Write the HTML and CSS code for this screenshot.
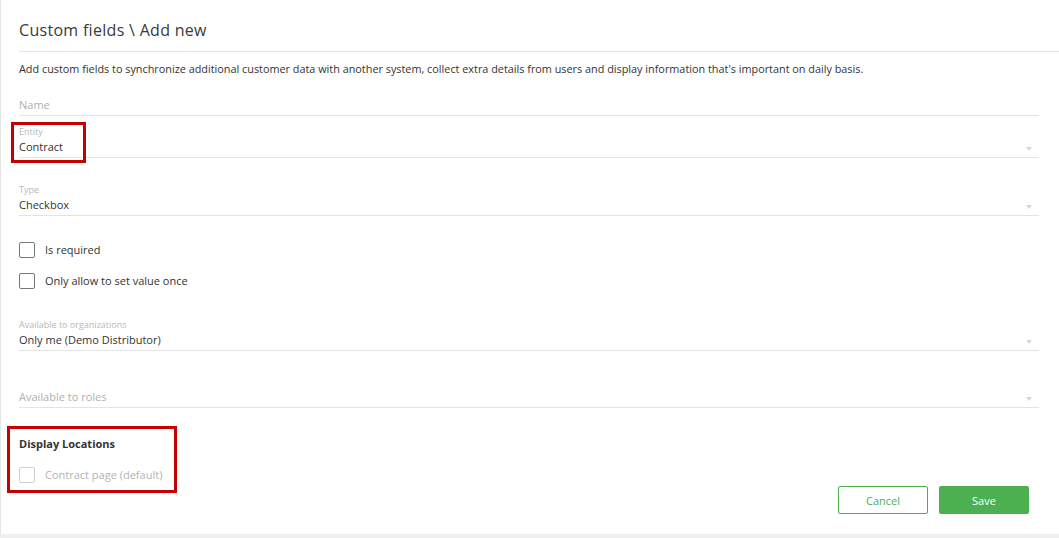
FILE: index.html
```html
<!DOCTYPE html>
<html>
<head>
<meta charset="utf-8">
<link rel="stylesheet" href="styles.css">
</head>
<body>
<div class="card">
  <div class="header"><h1 class="title">Custom fields \ Add new</h1></div>
  <div class="form">
    <p class="desc">Add custom fields to synchronize additional customer data with another system, collect extra details from users and display information that's important on daily basis.</p>

    <div class="field f-name">
      <div class="label"></div>
      <div class="value placeholder">Name</div>
    </div>

    <div class="field f-entity select">
      <div class="label">Entity</div>
      <div class="value">Contract</div>
      <span class="caret"></span>
      <span class="annot annot-entity"></span>
    </div>

    <div class="field f-type select">
      <div class="label">Type</div>
      <div class="value">Checkbox</div>
      <span class="caret"></span>
    </div>

    <div class="checks">
      <label class="check"><span class="box"></span><span>Is required</span></label>
      <label class="check"><span class="box"></span><span>Only allow to set value once</span></label>
    </div>

    <div class="field f-orgs select">
      <div class="label">Available to organizations</div>
      <div class="value">Only me (Demo Distributor)</div>
      <span class="caret"></span>
    </div>

    <div class="field f-roles select">
      <div class="label"></div>
      <div class="value placeholder">Available to roles</div>
      <span class="caret"></span>
    </div>

    <div class="locations">
      <div class="loc-title">Display Locations</div>
      <label class="check disabled"><span class="box"></span><span>Contract page (default)</span></label>
      <span class="annot annot-loc"></span>
    </div>

    <div class="actions">
      <button class="btn btn-cancel">Cancel</button>
      <button class="btn btn-save">Save</button>
    </div>
  </div>
</div>
</body>
</html>
```
FILE: styles.css
```css
html, body {
  margin: 0;
  padding: 0;
  background: #f0f0f0;
  font-family: "Open Sans", "Liberation Sans", sans-serif;
  color: #333;
}
.card {
  background: #fff;
  border-left: 1px solid #e6e6e6;
  height: 534px;
  box-shadow: 0 1px 1px rgba(0,0,0,0.06);
  box-sizing: border-box;
  overflow: hidden;
}
.header {
  margin-left: 18px;
  padding-top: 19px;
  padding-bottom: 10px;
  border-bottom: 1px solid #e3e3e3;
}
.title {
  margin: 0;
  font-size: 16px;
  line-height: 22px;
  font-weight: 400;
  color: #3a3a3a;
  letter-spacing: 0.3px;
}
.form {
  padding: 0 20px 0 18px;
}
.desc {
  margin: 8px 0 0;
  font-size: 10.85px;
  line-height: 17px;
  color: #333;
}
.field {
  position: relative;
  border-bottom: 1px solid #e3e3e3;
  padding-bottom: 2px;
}
.label {
  font-size: 9px;
  line-height: 12px;
  height: 12px;
  color: #b8b8b8;
}
.value {
  font-size: 11px;
  line-height: 17px;
  color: #333;
}
.placeholder { color: #b0b0b0; }
.f-name { margin-top: 7px; }
.f-entity { margin-top: 10px; }
.f-type { margin-top: 26px; }
.f-orgs { margin-top: 30px; }
.f-roles { margin-top: 25px; }
.caret {
  position: absolute;
  right: 7px;
  top: 21px;
  width: 0;
  height: 0;
  border-left: 3.5px solid transparent;
  border-right: 3.5px solid transparent;
  border-top: 4px solid #d6d6d6;
}
.checks {
  margin-top: 26px;
  display: flex;
  flex-direction: column;
  gap: 15px;
}
.check {
  display: flex;
  align-items: center;
  gap: 10px;
  font-size: 11px;
  line-height: 16px;
  color: #333;
}
.box {
  width: 14px;
  height: 14px;
  border: 1px solid #777;
  border-radius: 2px;
  box-sizing: content-box;
  flex: none;
}
.check.disabled { color: #b4b4b4; }
.check.disabled .box { border-color: #cfcfcf; }
.locations {
  position: relative;
  margin-top: 27px;
}
.loc-title {
  font-size: 11px;
  font-weight: 700;
  line-height: 17px;
  color: #333;
  margin-bottom: 15px;
}
.annot {
  position: absolute;
  border: 3px solid #c40000;
  box-sizing: border-box;
  pointer-events: none;
}
.annot-entity {
  left: -8px;
  top: -4px;
  width: 75px;
  height: 41px;
}
.annot-loc {
  left: -12px;
  top: -9px;
  width: 170px;
  height: 67px;
}
.actions {
  display: flex;
  justify-content: flex-end;
  gap: 11px;
  margin-top: 3px;
  padding-right: 10px;
}
.btn {
  width: 90px;
  height: 28px;
  border-radius: 2px;
  font-family: inherit;
  font-size: 11px;
  cursor: pointer;
}
.btn-cancel {
  background: #fff;
  border: 1px solid #4caf50;
  color: #4caf50;
}
.btn-save {
  background: #4caf50;
  border: 1px solid #4caf50;
  color: #fff;
}
```
